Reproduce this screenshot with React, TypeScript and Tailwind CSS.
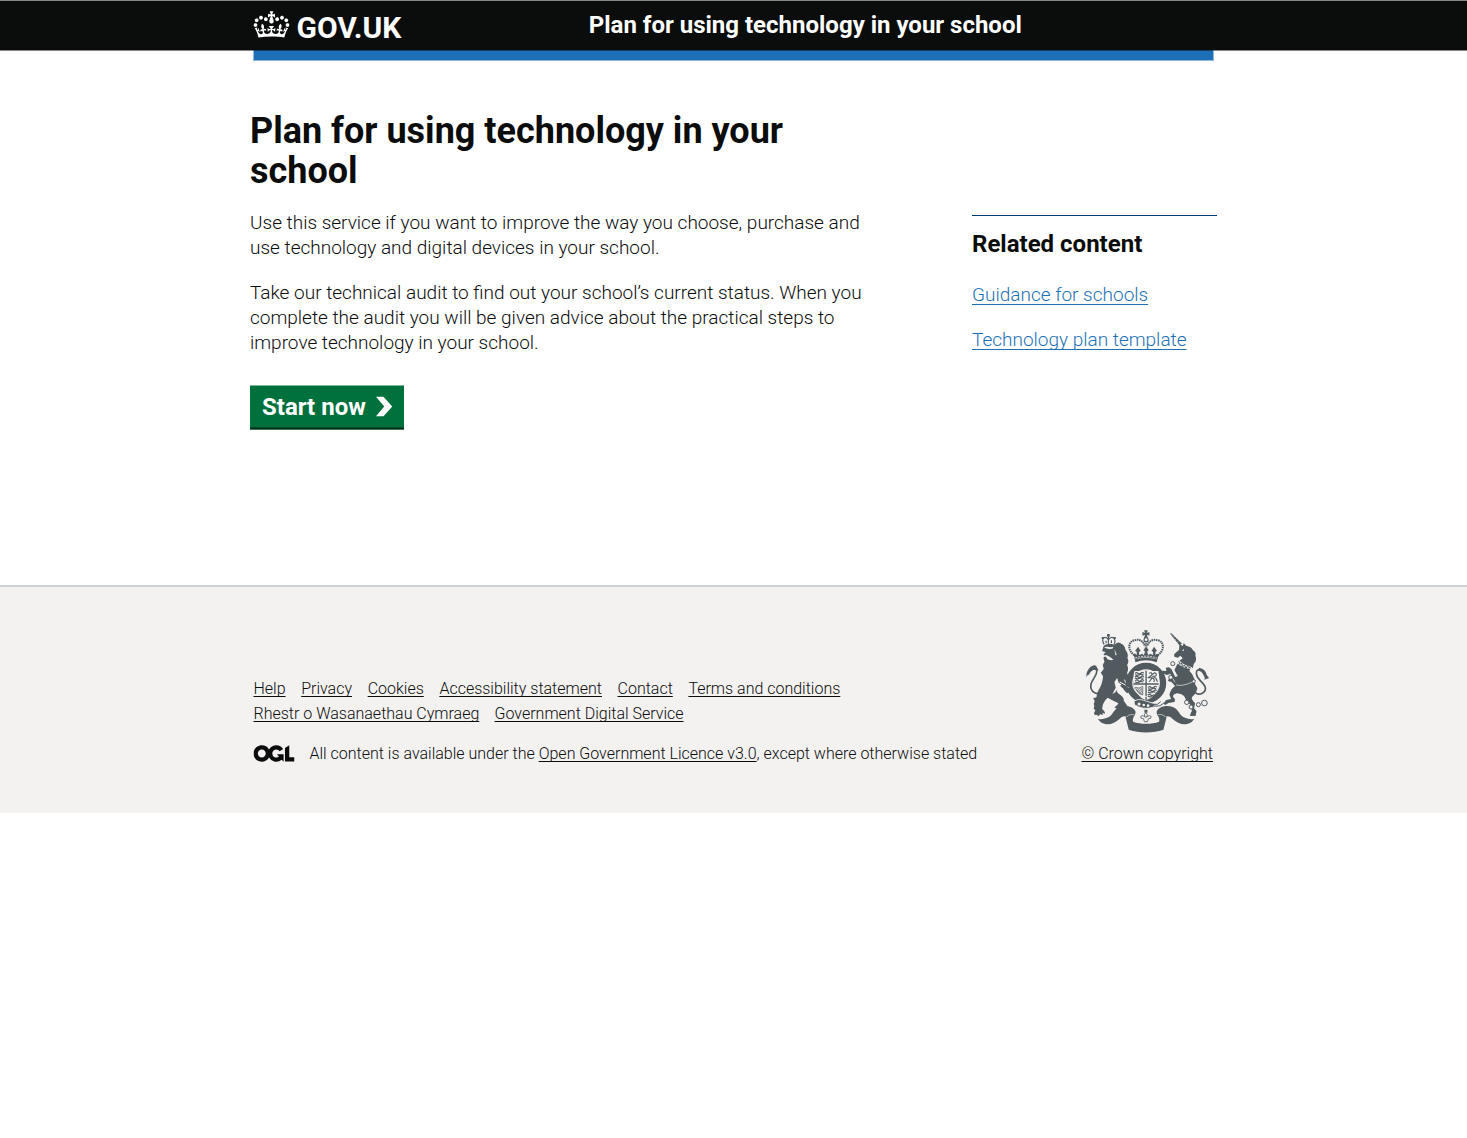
import type { ReactNode } from "react";

const DARK = "#505a5f";
const PAPER = "#f3f2f1";

function Crown() {
  return (
    <svg className="mt-[10px] h-[27px] w-[36px] shrink-0 -translate-x-[0.5px]" viewBox="0 0 132 97" fill="currentColor" aria-hidden="true">
      <path
        fillRule="evenodd"
        d="M25 30.2c3.5 1.5 7.7-.2 9.1-3.7 1.5-3.6-.2-7.8-3.9-9.2-3.6-1.4-7.6.3-9.1 3.9-1.4 3.5.3 7.5 3.9 9zM9 39.5c3.6 1.5 7.8-.2 9.2-3.7 1.5-3.6-.2-7.8-3.9-9.1-3.6-1.5-7.6.2-9.1 3.8-1.4 3.5.3 7.5 3.8 9zM4.4 57.2c3.5 1.5 7.7-.2 9.1-3.8 1.5-3.6-.2-7.7-3.9-9.1-3.5-1.5-7.6.3-9.1 3.8-1.4 3.5.3 7.6 3.9 9.1zm38.3-21.4c3.5 1.5 7.7-.2 9.1-3.8 1.5-3.6-.2-7.7-3.9-9.1-3.6-1.5-7.6.3-9.1 3.8-1.3 3.6.4 7.7 3.9 9.1zm64.4-5.6c-3.6 1.5-7.8-.2-9.1-3.7-1.5-3.6.2-7.8 3.8-9.2 3.6-1.4 7.7.3 9.2 3.9 1.3 3.5-.4 7.5-3.9 9zm15.9 9.3c-3.6 1.5-7.7-.2-9.1-3.7-1.5-3.6.2-7.8 3.7-9.1 3.6-1.5 7.7.2 9.2 3.8 1.5 3.5-.3 7.5-3.8 9zm4.7 17.7c-3.6 1.5-7.8-.2-9.2-3.8-1.5-3.6.2-7.7 3.9-9.1 3.6-1.5 7.7.3 9.2 3.8 1.3 3.5-.4 7.6-3.9 9.1zM89.3 35.8c-3.6 1.5-7.8-.2-9.2-3.8-1.4-3.6.2-7.7 3.9-9.1 3.6-1.5 7.7.3 9.2 3.8 1.4 3.6-.3 7.7-3.9 9.1zM69.7 17.7l8.9 4.7V9.3l-8.9 2.8c-.2-.3-.5-.6-.9-.9L72.4 0H59.6l3.5 11.2c-.3.3-.6.5-.9.9l-8.8-2.8v13.1l8.8-4.7c.3.3.6.7.9.9l-5 15.4v.1c-.2.8-.4 1.6-.4 2.4 0 4.1 3.1 7.5 7 8.1h.2c.3 0 .7.1 1 .1.4 0 .7 0 1-.1h.2c4-.6 7.1-4.1 7.1-8.1 0-.8-.1-1.7-.4-2.4V34l-5.1-15.4c.4-.2.7-.6 1-.9zM66 92.8c16.9 0 32.8 1.1 47.1 3.2 4-16.9 8.9-26.7 14-33.5l-9.6-3.4c1 4.9 1.1 7.2 0 10.2-1.5-1.4-3-4.3-4.2-8.7L108.6 76c2.8-2 5-3.2 7.5-3.3-4.4 9.4-10 11.9-13.6 11.2-4.3-.8-6.3-4.6-5.6-7.9 1-4.7 5.7-5.9 8-.5 4.3-8.7-3-11.4-7.6-8.8 7.1-7.2 7.9-13.5 2.1-21.1-8 6.1-8.1 12.3-4.5 20.8-4.7-5.4-12.1-2.5-9.5 6.2 3.4-5.2 7.9-2 7.2 3.1-.6 4.3-6.4 7.8-13.5 7.2-10.3-.9-10.9-8-11.2-13.8 2.5-.5 7.1 1.8 11 7.3L80.2 60c-4.1 4.4-8 5.3-12.3 5.4 1.4-4.4 8-11.6 8-11.6H55.5s6.4 7.2 7.9 11.6c-4.2-.1-8-1-12.3-5.4l1.4 16.4c3.9-5.5 8.5-7.7 10.9-7.3-.3 5.8-.9 12.8-11.1 13.8-7.2.6-12.9-2.9-13.5-7.2-.7-5 3.8-8.3 7.1-3.1 2.7-8.7-4.6-11.6-9.4-6.2 3.7-8.5 3.6-14.7-4.6-20.8-5.8 7.6-5 13.9 2.2 21.1-4.7-2.6-11.9.1-7.7 8.8 2.3-5.5 7.1-4.2 8.1.5.7 3.3-1.3 7.1-5.7 7.9-3.5.7-9-1.8-13.5-11.2 2.5.1 4.7 1.3 7.5 3.3l-4.7-15.4c-1.2 4.4-2.7 7.2-4.3 8.7-1.1-3-.9-5.3 0-10.2l-9.5 3.4c5 6.9 9.9 16.7 14 33.5 14.8-2.1 30.8-3.2 47.7-3.2z"
      />
    </svg>
  );
}

function OglLogo() {
  return (
    <svg className="h-[17px] w-[41px] shrink-0 -translate-x-[0.5px]" viewBox="0 0 483.2 195.7" fill="currentColor" role="img" aria-label="OGL">
      <path d="M421.5 142.8V.1l-50.7 32.3v161.1h112.4v-50.7zm-122.3-9.6A47.12 47.12 0 0 1 221 97.8c0-26 21.1-47.1 47.1-47.1 16.7 0 31.4 8.7 39.7 21.8l42.7-27.2A97.63 97.63 0 0 0 268.1 0c-36.5 0-68.3 20.1-85.1 49.7A98 98 0 0 0 97.8 0C43.9 0 0 43.9 0 97.8s43.9 97.8 97.8 97.8c36.5 0 68.3-20.1 85.1-49.7a97.76 97.76 0 0 0 149.6 25.4l19.4 22.2h3v-87.8h-80l24.3 27.5zM97.8 145c-26 0-47.1-21.1-47.1-47.1s21.1-47.1 47.1-47.1 47.1 21.1 47.1 47.1S123.8 145 97.8 145" />
    </svg>
  );
}

/* Royal coat of arms: lion, crowned garter shield, unicorn and motto ribbon. */
function RoyalArms() {
  return (
    <svg
      className="h-[112px] w-[136px] -translate-x-[1.25px]"
      viewBox="0 0 408 336"
      fill={DARK}
      aria-hidden="true"
    >
      {/* ribbon */}
      <path d="M54 281C66 285 84 281 94 271C101 262 106 251 119 246C136 240 160 244 167 259C169 268 162 274 156 274L147 284C140 272 132 270 120 281C107 293 92 300 76 297C66 295 59 289 54 281Z" />
      <path d="M344 281C332 285 314 281 304 271C297 262 292 251 279 246C262 240 238 244 231 259C229 268 236 274 242 274L251 284C258 272 266 270 278 281C291 293 306 300 322 297C332 295 339 289 344 281Z" />
      <path d="M138 278C139 268 157 263 166 269C160 276 158 284 160 290C182 298 216 298 238 290C240 284 238 276 232 269C241 263 259 268 260 278C257 289 254 302 251 314C220 325 178 325 147 314C144 302 141 289 138 278Z" />
      <path d="M141 276C147 268 158 267 164 270M257 276C251 268 240 267 234 270" fill="none" stroke={PAPER} strokeWidth="2" />

      {/* garter and shield */}
      <circle cx="199" cy="174" r="51" fill={PAPER} stroke={DARK} strokeWidth="19" />
      <circle cx="199" cy="175" r="38" fill={DARK} />
      <path d="M164 138H197V175H161Q160 152 164 138ZM201 138H236Q240 156 238 175H201ZM161 179H197V225Q170 214 161 179ZM201 179H238Q230 214 201 225Z" fill={PAPER} />
      <g fill="none" stroke={DARK} strokeWidth="3.4">
        <path d="M166 145q5-4 9 0t9-1 8 1M166 149q8 3 13 0t12 0M166 156q5-4 9 0t9-1 8 1M166 160q8 3 13 0t12 0M166 167q5-4 9 0t9-1 8 1M166 171q8 3 13 0t12 0" />
        <path d="M205 187q5-4 9 0t9-1 8 1M205 191q8 3 13 0t11 0M205 198q5-4 9 0t9-1 7 1M205 202q8 3 12 0t10 0M204 210q5-4 9 0t9-1M204 214q8 3 12 0" />
        <path d="M208 145q8-5 9 4l8-6q7 3 3 10l-8 1 9 7 4 9M217 150l-11 8 11 1-9 12M217 158q10 5 5 13" />
        <path d="M167 187q10 6 22-3v26q-17-4-22-23ZM173 190l13 16M179 190l9 12M171 194l14 14M183 188l4 7" strokeWidth="2.2" />
      </g>
      <path d="M163 229Q174 220 192 226L221 235Q230 240 220 247Q190 256 164 239Z" stroke={PAPER} strokeWidth="2.5" />
      <circle cx="178" cy="237" r="4.5" fill={PAPER} />
      <circle cx="192" cy="240" r="4" fill={PAPER} />
      <circle cx="205" cy="242" r="4" fill={PAPER} />
      <path d="M223 243Q242 246 253 233M221 238Q234 242 243 230" fill="none" stroke={DARK} strokeWidth="3" />
      <path d="M194 254h9v9h-9z" />
      <path d="M198 262q-8 8-1 15q-9-9-14-3q-2 8 8 7l3 9h9l3-9q10 1 8-7q-5-6-14 3q7-7-2-15Z" fill={PAPER} stroke={DARK} strokeWidth="2.5" />

      {/* crown */}
      <g>
        <path d="M193 16h11l-3 8 8-3v11l-8-3 3 9h-11l3-9-8 3V21l8 3Z" />
        <path d="M199 48v24" fill="none" stroke={DARK} strokeWidth="8" strokeDasharray="4 2.4" />
        <circle cx="199" cy="44" r="6" fill={PAPER} stroke={DARK} strokeWidth="3.5" />
        <path d="M164 91C142 76 144 47 168 45C181 42 191 50 195 62M234 91C256 76 254 47 230 45C217 42 207 50 203 62" fill="none" stroke={DARK} strokeWidth="6" strokeDasharray="4.5 2" />
        <path d="M163 94Q161 83 167 86L171 90L171 80L166 78L175 65L183 78L178 80V90L188 86L192 91L196 80L191 75L199 66L207 75L202 80L206 91L211 86L220 90V80L215 78L223 65L232 78L227 80V90Q236 81 236 94L233 103Q199 91 165 103Z" />
        <path d="M165 103Q199 94 233 103L231 112Q199 100 167 112Z" />
        <path d="M166 99Q199 88 232 99" fill="none" stroke={PAPER} strokeWidth="2.5" strokeDasharray="6 3" />
      </g>

      {/* lion */}
      <g>
        <path d="M70 56L68 38L77 33L86 30L96 33L106 38L104 58Q87 50 70 56Z" fill={PAPER} />
        <path d="M73 58Q66 46 71 39Q79 34 86 44Q94 33 103 40Q108 47 103 59M86 32V56M79 47v8M95 46v8" fill="none" stroke={DARK} strokeWidth="3.6" />
        <path d="M82 27h8v8h-8zM66 36h6v6h-6zM102 36h6v6h-6z" />
        <path d="M72 62Q88 52 104 60Q112 49 121 54Q136 61 137 74Q147 86 143 99Q149 110 142 120Q148 132 142 143L150 166Q149 175 139 181L153 197L142 205L126 188L119 181L109 194Q113 206 122 210Q134 219 132 227L143 243Q140 252 122 248L111 251L104 247L112 241L116 235Q96 225 84 218Q75 224 70 237L67 251Q78 262 75 266L68 263L70 270L61 268L56 274L51 269Q42 272 43 263L47 256Q39 252 44 243Q40 236 45 228L40 220L50 217Q50 204 57 194Q68 178 70 154L63 143L72 132L69 120L74 110L71 98L77 93L71 88L78 82L67 78Z" />
        <path d="M73 66L82 65L92 67L101 65L98 71L88 72L78 70Z" fill={PAPER} />
        <path d="M78 89L91 96L101 104L95 106L83 103L80 97L75 94ZM104 72L111 90L107 91ZM112 159L117 173L125 178L119 186L111 193L107 202L98 207L108 188L104 171Z" fill={PAPER} />
        <path d="M63 203C45 212 29 195 34 176C38 163 52 151 51 137C49 128 36 127 25 149" fill="none" stroke={DARK} strokeWidth="5" />
        <path d="M20 157Q18 139 32 126Q41 119 49 122L57 137Q50 133 40 135Q28 141 20 157Z" />
        <path d="M134 164L146 188M120 171L139 181M118 182L132 194" stroke={PAPER} strokeWidth="3" />
        <path d="M139 161l12 8-5 4 8 3-5 5 9 5-7 4-14-9Z" />
      </g>

      {/* unicorn */}
      <g>
        <path d="M271 26L299 61L307 56L274 24Z" />
        <path d="M273 31l3-3M279 38l4-4M285 45l4-4M291 53l5-4" stroke={PAPER} strokeWidth="1.5" />
        <path d="M299 57L309 63L312 54L319 62Q335 65 339 75Q350 82 347 92Q353 106 342 117L339 130L334 125L329 138L337 147L344 162Q343 176 353 190Q349 207 337 216Q333 222 346 235L343 250L350 258L347 272H331L336 259L335 242L320 227L313 213Q305 206 291 205Q278 209 280 216Q289 224 284 231L266 234L257 240L251 236L259 225L274 222L269 209Q274 190 286 183L278 174L274 170Q265 171 264 165Q275 160 272 147L261 150L249 145L247 137L260 138L258 128L267 127L275 132L286 155L294 154L284 135L291 121L298 108L309 100L302 92L294 98L284 95L283 88L298 74Z" />
        <path d="M306 76l7-3-1 5zM298 106Q313 123 334 124L331 131Q309 130 292 114Z" fill={PAPER} />
        <path d="M297 109l4 9 4-4 4 11 5-5 5 10 4-8 6 7 4-9" fill="none" stroke={DARK} strokeWidth="3" />
        <path d="M346 202C358 214 378 203 377 189C376 175 355 166 351 151C347 134 358 128 368 140L379 159" fill="none" stroke={DARK} strokeWidth="5" />
        <path d="M358 128Q378 132 381 150L388 159L374 164L376 151Q368 139 355 137Z" />
        <path d="M270 146L286 172M289 180Q310 185 340 170" fill="none" stroke={PAPER} strokeWidth="2" />
        <g fill={PAPER} stroke={DARK} strokeWidth="3">
          <circle cx="279" cy="116" r="6" />
          <circle cx="273" cy="157" r="6" />
          <circle cx="342" cy="169" r="5" />
          <circle cx="321" cy="232" r="6.5" />
          <circle cx="334" cy="246" r="6" />
          <circle cx="356" cy="239" r="6" />
          <circle cx="374" cy="234" r="8.5" />
        </g>
        <path d="M335 262l-5 10h17l3-12-8-4z" />
      </g>
    </svg>
  );
}

function FooterLink({ children }: { children: ReactNode }) {
  return (
    <a href="#" className="underline decoration-1 underline-offset-[2px] [text-decoration-skip-ink:none]">
      {children}
    </a>
  );
}

function RelatedLink({ children }: { children: ReactNode }) {
  return (
    <li>
      <a href="#" className="underline decoration-1 underline-offset-[3px] [text-decoration-skip-ink:none]">
        {children}
      </a>
    </li>
  );
}

export default function App() {
  return (
    <div className="min-h-screen bg-white font-['Roboto',sans-serif] text-[#0b0c0c]">
      <header className="h-[51px] border-y border-[#858686] bg-[#0b0c0c] text-white">
        <div className="mx-auto flex h-full w-[960px]">
          <Crown />
          <span className="ml-[7px] mt-[10px] text-[30px] font-bold leading-[34px]">GOV.UK</span>
          <span className="ml-[187.5px] mt-[9px] text-2xl font-bold leading-[30px]">
            Plan for using technology in your school
          </span>
        </div>
      </header>
      <div className="-mt-px ml-[253px] h-[11px] w-[961px] border border-x-[#8eb7db] border-b-[#8eb7db] border-t-[#143e62] bg-[#1d70b8]" />

      <main className="mx-auto flex h-[524px] w-[967px] justify-between pt-[49px]">
        <div className="w-[625px]">
          <h1 className="w-[600px] translate-y-[0.5px] text-4xl font-bold leading-10">
            Plan for using technology in your school
          </h1>
          <p className="mt-5 text-[19px] font-light leading-[25px]">
            Use this service if you want to improve the way you choose, purchase and use technology and digital devices
            in your school.
          </p>
          <p className="mt-5 text-[19px] font-light leading-[25px]">
            Take our technical audit to find out your school’s current status. When you complete the audit you will be
            given advice about the practical steps to improve technology in your school.
          </p>
          <button className="mt-[30px] flex h-[44px] w-[154px] translate-y-[0.5px] items-center border-b-2 border-[#002d18] bg-[#00703c] pl-3 text-2xl font-bold text-white">
            Start now
            <svg className="ml-[10px] h-5 w-[17px] -translate-x-[0.5px]" viewBox="0 0 33 40" fill="currentColor" aria-hidden="true">
              <path d="M0 0h15l18 20-18 20H0l17-20z" />
            </svg>
          </button>
        </div>
        <aside className="mt-[105px] h-40 w-[245px] border-t border-[#003b70]">
          <h2 className="mt-[13px] text-2xl font-bold leading-[30px]">Related content</h2>
          <ul className="mt-[23px] space-y-5 text-[19px] font-light leading-[25px] text-[#1d70b8]">
            <RelatedLink>Guidance for schools</RelatedLink>
            <RelatedLink>Technology plan template</RelatedLink>
          </ul>
        </aside>
      </main>

      <footer className="h-[228px] border-t-2 border-[#cfd1d2] bg-[#f3f2f1] text-base font-light">
        <div className="mx-auto flex w-[960px] justify-between">
          <div className="pt-[89px] leading-[25px]">
            <div className="flex gap-x-[15.6px]">
              <FooterLink>Help</FooterLink>
              <FooterLink>Privacy</FooterLink>
              <FooterLink>Cookies</FooterLink>
              <FooterLink>Accessibility statement</FooterLink>
              <FooterLink>Contact</FooterLink>
              <FooterLink>Terms and conditions</FooterLink>
            </div>
            <div className="flex gap-x-[15.2px]">
              <FooterLink>Rhestr o Wasanaethau Cymraeg</FooterLink>
              <FooterLink>Government Digital Service</FooterLink>
            </div>
            <div className="mt-[15px] flex items-center gap-[15px]">
              <OglLogo />
              <span>
                All content is available under the <FooterLink>Open Government Licence v3.0</FooterLink>, except where
                otherwise stated
              </span>
            </div>
          </div>
          <div className="-mr-[3px] flex w-[136px] flex-col pt-[38px] leading-[25px]">
            <RoyalArms />
            <span className="mt-[4px] whitespace-nowrap pl-px">
              <FooterLink>© Crown copyright</FooterLink>
            </span>
          </div>
        </div>
      </footer>
    </div>
  );
}
